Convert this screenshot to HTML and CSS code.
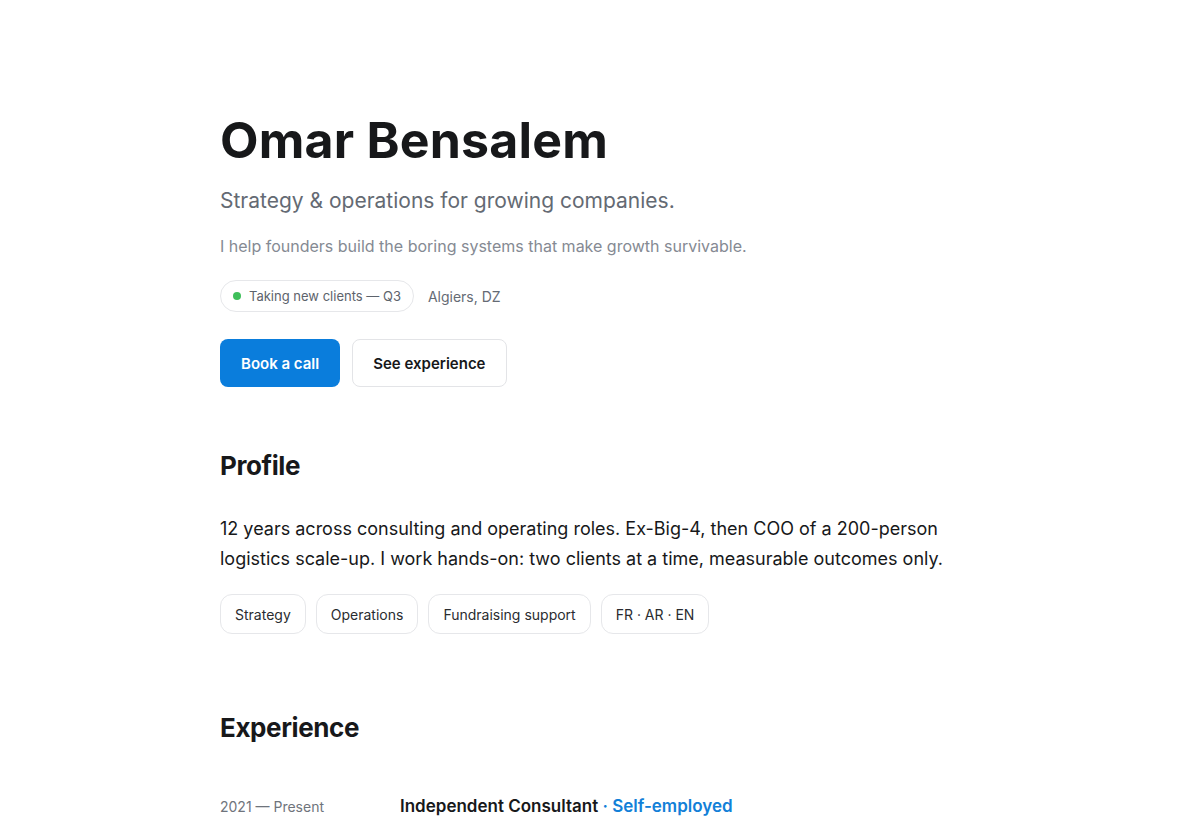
FILE: index.html
```html
<!DOCTYPE html>
<html>
<head>
    <title>Omar Bensalem</title>
    <link rel="stylesheet" href="styles.css">
</head>
<body>
    <main class="page">
        <header class="hero">
            <h1 class="hero-name">Omar Bensalem</h1>
            <p class="hero-role">Strategy &amp; operations for growing companies.</p>
            <p class="hero-pitch">I help founders build the boring systems that make growth survivable.</p>

            <div class="hero-meta">
                <span class="status-pill"><span class="status-dot"></span>Taking new clients — Q3</span>
                <span class="hero-location">Algiers, DZ</span>
            </div>

            <div class="hero-actions">
                <a class="btn btn-primary" href="#contact">Book a call</a>
                <a class="btn btn-ghost" href="#experience">See experience</a>
            </div>
        </header>

        <section class="section" id="profile">
            <h2 class="section-title">Profile</h2>
            <p class="profile-text">12 years across consulting and operating roles. Ex-Big-4, then COO of a 200-person logistics scale-up. I work hands-on: two clients at a time, measurable outcomes only.</p>
            <ul class="tags">
                <li class="tag">Strategy</li>
                <li class="tag">Operations</li>
                <li class="tag">Fundraising support</li>
                <li class="tag">FR · AR · EN</li>
            </ul>
        </section>

        <section class="section section-experience" id="experience">
            <h2 class="section-title">Experience</h2>
            <div class="job">
                <div class="job-dates">2021 — Present</div>
                <div class="job-body">
                    <h3 class="job-title">Independent Consultant <span class="job-org">· Self-employed</span></h3>
                </div>
            </div>
        </section>
    </main>
</body>
</html>
```

FILE: styles.css
```css
body {
    margin: 0;
    background-color: #fff;
    color: #17181a;
    font-family: Inter, "Noto Sans", sans-serif;
}
.page {
    width: 760px;
    margin: 0 auto;
    padding: 108px 0 0 0;
}
.hero-name {
    margin: 0;
    font-size: 50px;
    font-weight: 700;
    letter-spacing: 0.2px;
    line-height: 64px;
}
.hero-role {
    margin: 15px 0 0 0;
    font-size: 21px;
    line-height: 28px;
    color: #646a73;
}
.hero-pitch {
    margin: 19px 0 0 0;
    font-size: 16px;
    line-height: 24px;
    color: #858a93;
}
.hero-meta {
    display: flex;
    align-items: center;
    gap: 14px;
    margin-top: 22px;
}
.status-pill {
    display: inline-flex;
    align-items: center;
    gap: 8px;
    height: 32px;
    box-sizing: border-box;
    padding: 0 12px;
    border: 1px solid #e6e7ea;
    border-radius: 999px;
    font-size: 13px;
    color: #5d636c;
}
.status-dot {
    width: 8px;
    height: 8px;
    border-radius: 50%;
    background-color: #3fbf5a;
}
.hero-location {
    font-size: 14px;
    color: #656b74;
}
.hero-actions {
    display: flex;
    gap: 12px;
    margin-top: 27px;
}
.btn {
    display: inline-flex;
    align-items: center;
    justify-content: center;
    height: 48px;
    box-sizing: border-box;
    padding: 0 21px;
    border-radius: 8px;
    font-size: 15px;
    font-weight: 600;
    text-decoration: none;
}
.btn-primary {
    background-color: #0a7ddc;
    color: #fff;
}
.btn-ghost {
    padding: 0 20px;
    border: 1px solid #e3e4e7;
    color: #17181a;
}
.section {
    margin-top: 63px;
}
.section-title {
    margin: 0;
    font-size: 26px;
    font-weight: 700;
    letter-spacing: -0.4px;
    line-height: 32px;
}
.profile-text {
    margin: 32px 0 0 0;
    font-size: 18px;
    line-height: 30px;
}
.tags {
    display: flex;
    gap: 10px;
    margin: 20px 0 0 0;
    padding: 0;
    list-style: none;
}
.tag {
    display: flex;
    align-items: center;
    height: 40px;
    box-sizing: border-box;
    padding: 0 14px;
    border: 1px solid #e6e7ea;
    border-radius: 12px;
    font-size: 14px;
    color: #2a2c30;
}
.section-experience {
    margin-top: 78px;
}
.job {
    display: flex;
    align-items: baseline;
    margin-top: 52px;
}
.job-dates {
    width: 180px;
    font-size: 14px;
    color: #6f747c;
}
.job-title {
    margin: 0;
    font-size: 17px;
    font-weight: 600;
}
.job-org {
    color: #1280d8;
}
```
